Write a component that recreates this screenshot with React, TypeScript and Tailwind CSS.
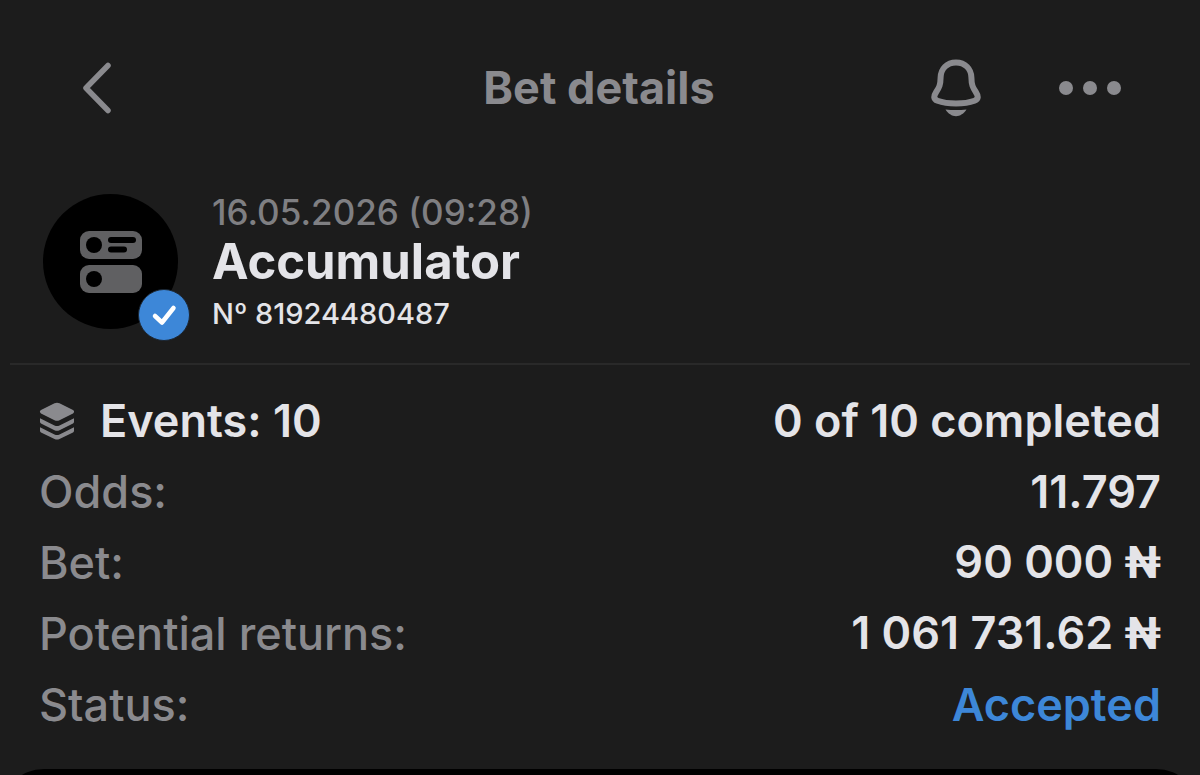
import clsx from 'clsx';

const rows = [
  { label: 'Odds:', value: '11.797' },
  { label: 'Bet:', value: '90 000', currency: '₦' },
  { label: 'Potential returns:', value: '1 061 731.62', currency: '₦' },
  { label: 'Status:', value: 'Accepted', accent: true },
];

export default function App() {
  return (
    <main className="flex flex-col h-screen overflow-hidden bg-[#1c1c1c] text-[#e4e4e8] font-[Inter,sans-serif]">
      <Header />
      <Summary />
      <section className="shrink-0 px-[39px] pt-5">
        <div className="flex items-center justify-between h-[71px] text-[45px] font-semibold">
          <h3 className="flex items-center gap-[25px]">
            <LayersIcon />
            Events: 10
          </h3>
          <p>0 of 10 completed</p>
        </div>
        <dl>
          {rows.map((row) => (
            <Row key={row.label} {...row} />
          ))}
        </dl>
      </section>
      {/* top edge of the events list */}
      <section className="mt-[29px] min-h-24 grow shrink-0 rounded-t-[44px] bg-black" />
    </main>
  );
}

function Header() {
  return (
    <header className="grid grid-cols-[1fr_auto_1fr] items-center shrink-0 h-44 pl-19 pr-[78px] text-[#8a8a8e]">
      <button type="button" aria-label="Back" className="justify-self-start">
        <svg width="40" height="56" viewBox="0 0 40 56" fill="none">
          <path
            d="M32 5.5 10 28l22 22.5"
            stroke="currentColor"
            strokeWidth="5.5"
            strokeLinecap="round"
            strokeLinejoin="round"
          />
        </svg>
      </button>
      <h1 className="text-[45px] font-bold">Bet details</h1>
      <div className="flex items-center gap-[77px] justify-self-end">
        <button type="button" aria-label="Notifications">
          <svg width="50" height="58" viewBox="0 0 50 58" fill="none">
            <path
              d="M25 3.4C15.8 3.4 9.8 10 9.6 18.5 9.5 26 8.2 28.5 5.2 33 2.3 37.5 2.6 40.3 6.5 41.7 11.5 43.5 18 44.4 25 44.4s13.5-.9 18.5-2.7c3.9-1.4 4.2-4.2 1.3-8.7-3-4.5-4.3-7-4.4-14.5C40.2 10 34.2 3.4 25 3.4Z"
              stroke="currentColor"
              strokeWidth="6"
              strokeLinejoin="round"
            />
            <path d="M14.5 50.5c7 .8 14 .8 21 0C33 54.5 29 57.2 25 57.2s-8-2.7-10.5-6.7Z" fill="currentColor" />
          </svg>
        </button>
        <button type="button" aria-label="More">
          <svg width="64" height="16" viewBox="0 0 64 16" fill="currentColor">
            <circle cx="8" cy="8" r="7" />
            <circle cx="32" cy="8" r="7" />
            <circle cx="56" cy="8" r="7" />
          </svg>
        </button>
      </div>
    </header>
  );
}

function Summary() {
  return (
    <section className="flex items-start gap-[34px] shrink-0 mx-[10px] pl-[33px] pt-4 pb-[27px] border-b-2 border-[#292929]">
      <div className="relative flex items-center justify-center mt-0.5 size-[135px] shrink-0 rounded-full bg-black">
        <svg width="62" height="62" viewBox="0 0 62 62" fill="#606062">
          <rect width="62" height="28" rx="9" />
          <rect y="34" width="62" height="28" rx="9" />
          <g fill="#000">
            <circle cx="14" cy="14" r="8" />
            <circle cx="14" cy="48" r="8" />
            <rect x="28" y="6" width="28" height="6" rx="3" />
            <rect x="28" y="15.5" width="19" height="6" rx="3" />
          </g>
        </svg>
        <span className="absolute -right-3 -bottom-3 flex items-center justify-center size-[52px] rounded-full border border-[#1c2632] bg-[#3d87d8]">
          <svg width="26" height="22" viewBox="0 0 26 22" fill="none">
            <path
              d="m4 12 7 6.5L22.5 4"
              stroke="#fff"
              strokeWidth="4.5"
              strokeLinecap="round"
              strokeLinejoin="round"
            />
          </svg>
        </span>
      </div>
      <div className="flex flex-col">
        <p className="text-[35px] leading-10 font-medium text-[#7f7f82]">16.05.2026 (09:28)</p>
        <h2 className="text-[49px] leading-15 font-bold">Accumulator</h2>
        <p className="text-[29px] leading-11 font-medium">Nº 81924480487</p>
      </div>
    </section>
  );
}

type RowProps = { label: string; value: string; currency?: string; accent?: boolean };

function Row({ label, value, currency, accent }: RowProps) {
  return (
    <div className="flex items-center justify-between h-[71px] text-[45px]">
      <dt className="font-medium text-[#8a8a8e]">{label}</dt>
      <dd className={clsx('font-semibold', accent && 'text-[#3d87d8]')}>
        {value}
        {currency && <span className="font-[Roboto,sans-serif] font-bold"> {currency}</span>}
      </dd>
    </div>
  );
}

function LayersIcon() {
  return (
    <svg width="36" height="38" viewBox="0 0 36 38" fill="#8a8a8e">
      <path d="M15.5 1.2Q18 .2 20.5 1.2L34 8q2.2 1.7 0 3.4L20.5 18.2Q18 19.2 15.5 18.2L2 11.4Q-.2 9.7 2 8Z" />
      <path d="M1 16.2v3.6q0 1 1 1.6l13.5 6.8q2.5 1 5 0L34 21.4q1-.6 1-1.6v-3.6l-14.5 7.2q-2.5 1-5 0Z" />
      <path d="M1 25.2v3.6q0 1 1 1.6l13.5 6.6q2.5 1 5 0L34 30.4q1-.6 1-1.6v-3.6l-14.5 7.2q-2.5 1-5 0Z" />
    </svg>
  );
}
